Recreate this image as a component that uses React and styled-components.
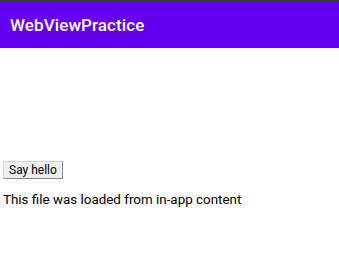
import styled, { createGlobalStyle } from "styled-components";

const GlobalStyle = createGlobalStyle`
  html, body {
    margin: 0;
    padding: 0;
    background: #ffffff;
    font-family: Roboto, "Noto Sans", sans-serif;
  }
`;

const Screen = styled.div`
  display: flex;
  flex-direction: column;
  width: 339px;
  height: 276px;
  overflow: hidden;
`;

const StatusBar = styled.div`
  height: 2px;
  background: #3a3a3a;
`;

const Toolbar = styled.header`
  display: flex;
  align-items: center;
  height: 46px;
  padding-left: 10px;
  background: #6200ee;
  color: #ffffff;
  font-size: 17px;
  font-weight: 500;
  letter-spacing: 0.1px;
`;

const Content = styled.main`
  display: flex;
  flex-direction: column;
  align-items: flex-start;
  padding: 113px 3px 0;
`;

const Button = styled.button`
  font-family: Roboto, sans-serif;
  font-size: 12px;
  height: 18px;
  padding: 0 5px;
  color: #000;
  background: #efefef;
  border: 1px solid #d4d4d4;
  border-right-color: #8a8a8a;
  border-bottom-color: #8a8a8a;
  border-radius: 0;
`;

const Message = styled.p`
  margin: 13px 0 0;
  font-size: 13.4px;
  color: #000;
`;

const App = () => {
  return (
    <Screen>
      <GlobalStyle />
      <StatusBar />
      <Toolbar>WebViewPractice</Toolbar>
      <Content>
        <Button>Say hello</Button>
        <Message>This file was loaded from in-app content</Message>
      </Content>
    </Screen>
  );
};

export default App;
